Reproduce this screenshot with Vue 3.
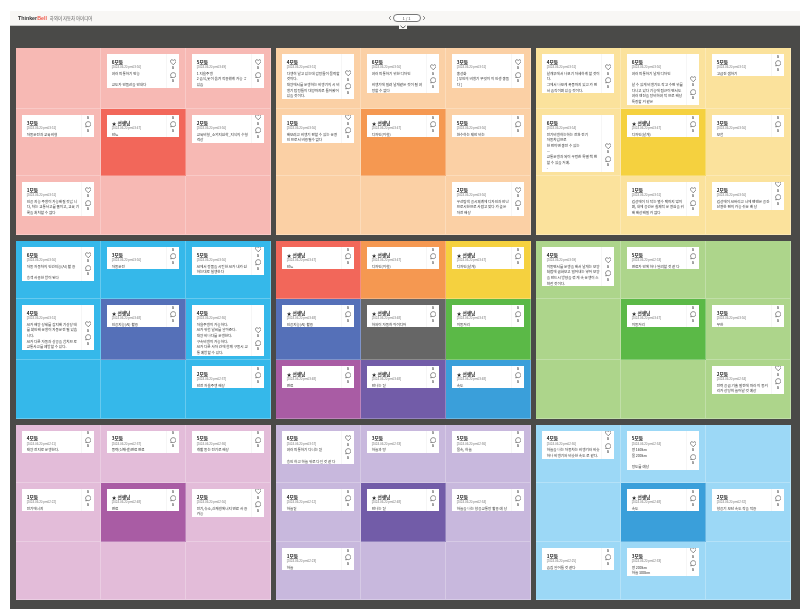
<script setup>
const note = (team, time, text) => ({ team, time, text })
const teacher = (time, text) => ({ team: '★ 선생님', time, text, lead: true })

// 9칸씩: 가운데가 주제 칸, null 은 빈 칸
const boards = [
  {
    name: 'red', band: 1,
    cells: [
      null,
      note('6모둠', 'pm03:50', '여러 피통하기 반능\n\n교도가 안돌산을 안내다'),
      note('5모둠', 'pm03:49', '1 지율주행\n2 음식,옷이 옮겨 작용했게 가능 ㅎ 있음'),
      note('3모둠', 'pm03:51', '자동운전과 교육비형'),
      teacher('pm03:47', '안뇨'),
      note('2모둠', 'pm03:50', '교육비형_소외지원학_지식의 수형 격상'),
      note('1모둠', 'pm03:51', '인공 지능 주행이 가능해질 것입 니다, 차는 교통사고를 줄이고, 교육 기록을 처치할 수 없다'),
      null,
      null,
    ],
  },
  {
    name: 'orange', band: 1,
    cells: [
      note('4모둠', 'pm03:51', '다행히 날고 있는데 감정들이 몰락할 것이다.\n대양에서를 운행하는 비행기의 시 비행기 탐정들이 대양까지로 들어왔어 있을 것이다.'),
      note('6모둠', 'pm03:50', '여러 피통하기 위한 디자인\n\n비행기에 밀려 날개같은 것이 될 여정할 수 없다'),
      note('3모둠', 'pm03:51', '충성화\n[ 부인의 비행기 무엇이 이 인생 충돌다 ]'),
      note('1모둠', 'pm03:50', '해보려고 비행기 판할 수 있는 운영인 으로서 비용될수 없다'),
      teacher('pm03:47', '디자인(외형)'),
      note('5모둠', 'pm03:50', '환수하는 제안 비는'),
      null,
      null,
      note('2모둠', 'pm03:50', '우선탐색 공시체계에 디자인과 안난 으로시한으로 사람고 맞다 가 높은 자전 해상'),
    ],
  },
  {
    name: 'yellow', band: 1,
    cells: [
      note('4모둠', 'pm03:51', '날개부에서 나오기 자세하게 할 것이다.\n그에서 나오게 폭풍까지 있고 가 면서 움직이며 있을 것이다.'),
      note('6모둠', 'pm03:50', '여러 피통하기 날개 디자인\n\n날 수 있게 비행기도 작고 수면 위를 다니고 있다 기능에 접근이 면서도 여러 엔진을 장비하여 적 으로 해상 특징할 거 같은'),
      note('5모둠', 'pm03:51', '고급진 쌤하기'),
      note('6모둠', 'pm03:54', '전기비행하는하는 전환 전기\n자동차임으로\n한 번이면 충전 수 있는\n—\n교통운행과 되이 우렁찬 특별 책 변할 수 있을 거예.\n-'),
      teacher('pm03:47', '디자인(날개)'),
      note('3모둠', 'pm03:50', '모험'),
      null,
      note('1모둠', 'pm03:51', '김성에이 더 작는 멸수 택까지 많이며, 내에 공간은 실제적 운 영원을 위해 해상해질 거 없다'),
      note('2모둠', 'pm03:50', '김성에이 AI버리고 너에 맨앤은 공간산영한 편의 가능 쉬운 배 상'),
    ],
  },
  {
    name: 'blue', band: 2,
    cells: [
      note('6모둠', 'pm03:50', '자동 자동차의 인간지능(AI) 활 용\n\n승객 사용한 방이 된다'),
      note('3모둠', 'pm03:50', '자동운전'),
      note('5모둠', 'pm03:50', 'AI에서 정품을 시킨한 AI가 내가 원하는대로 실행한다'),
      note('4모둠', 'pm03:51', 'AI가 해양 상세를 감지해 기상상 태를 확인해 운행이 자동운전 될 있습니다.\nAI가 다른 자동과 상공을 합치므 로 교통사고를 예방할 수 있다.'),
      teacher('pm03:48', '인공지능(AI) 활용'),
      note('4모둠', 'pm02:30', '자율주행이 가능하다.\nAI가 위험 날씨를 알아준다.\n대양 비나다를 운행한다.\n구속비행이 가능하다.\nAI가 다른 사자 간에 함께 구동시 교통 예방할 수 있다.'),
      null,
      null,
      note('2모둠', 'pm02:37', '안전 자율주행 해상'),
    ],
  },
  {
    name: 'topics', band: 2,
    cells: [
      teacher('pm03:47', '안뇨'),
      teacher('pm03:47', '디자인(외형)'),
      teacher('pm03:47', '디자인(날개)'),
      teacher('pm03:48', '인공지능(AI) 활용'),
      teacher('pm03:48', '하와이 자동차 아이디어'),
      teacher('pm03:47', '이동거리'),
      teacher('pm03:48', '연료'),
      teacher('pm03:48', '만나는 길'),
      teacher('pm03:48', '속도'),
    ],
  },
  {
    name: 'green', band: 2,
    cells: [
      note('4모둠', 'pm03:59', '이동면서를 운행을 해서 날개는 모양 처럼에 굽혀보고 밀어내는 넣어 모양을 만드시 방향을 꺾 게 속 운행이 스쳐갈 것이다.'),
      note('5모둠', 'pm02:53', '연료가 안에 하나 달려할 것 같 다'),
      null,
      null,
      teacher('pm03:47', '이동거리'),
      note('3모둠', 'pm03:50', '무한'),
      null,
      null,
      note('2모둠', 'pm02:34', '전력 공급 기술 발전에 따라 이 동거리가 상당히 늘어날 것 예상'),
    ],
  },
  {
    name: 'pink', band: 3,
    cells: [
      note('4모둠', 'pm02:11', '태양 전지로 운행한다.'),
      note('3모둠', 'pm02:37', '풍력(신재생)연료 연료'),
      note('5모둠', 'pm02:36', '개활 동는 전기로 해상'),
      note('1모둠', 'pm02:22', '전기에너지'),
      teacher('pm02:48', '연료'),
      note('2모둠', 'pm02:50', '전기,슈소,신재생에너지 연료 사 용 가능'),
      null,
      null,
      null,
    ],
  },
  {
    name: 'purple', band: 3,
    cells: [
      note('6모둠', 'pm03:57', '여러 피통하기 다니는 길\n\n승인 하고 하늘 위로 다닐 것 같 다'),
      note('3모둠', 'pm02:33', '하늘과 땅'),
      note('5모둠', 'pm02:36', '물속, 하늘'),
      note('4모둠', 'pm02:12', '하늘길'),
      teacher('pm02:48', '만나는 길'),
      note('2모둠', 'pm02:34', '하늘을 나는 항공교통망 활용 예 상'),
      note('1모둠', 'pm02:23', '하늘'),
      null,
      null,
    ],
  },
  {
    name: 'sky', band: 3,
    cells: [
      note('4모둠', 'pm02:30', '하늘을 나는 자동차는 비행기와 비슷하나 비행기와 비슷한 속도 로 같다.'),
      note('5모둠', 'pm02:34', '땅 160km\n물 200km\n\n정도를 예상'),
      null,
      null,
      teacher('pm02:48', '속도'),
      note('2모둠', 'pm02:32', '항공기 보단 속도 작을 적용'),
      note('1모둠', 'pm02:25', '음침 일어들 것 같다'),
      note('3모둠', 'pm02:33', '땅 200km\n하늘 300km'),
      null,
    ],
  },
]
</script>

<template>
  <div class="page">
    <header class="topbar">
      <div class="brand">
        <span class="brand__logo">Thinker<em>Bell</em></span>
        <span class="brand__title">하와이 자동차 아이디어</span>
      </div>
      <nav class="pager">
        <svg viewBox="0 0 6 8" class="pager__arrow"><path d="M4.5 1 1.5 4l3 3" /></svg>
        <span class="pager__num">1 / 1</span>
        <svg viewBox="0 0 6 8" class="pager__arrow"><path d="M1.5 1l3 3-3 3" /></svg>
      </nav>
      <button type="button" class="collapse">
        <svg viewBox="0 0 8 4"><path d="M1.5.8 4 3l2.500-2.200" /></svg>
      </button>
    </header>

    <main class="wall">
      <section
        v-for="board in boards"
        :key="board.name"
        class="board"
        :class="['band-' + board.band, 'board--' + board.name]"
      >
        <div
          v-for="(cell, i) in board.cells"
          :key="i"
          class="cell"
          :class="{ 'cell--lead': i === 4, ['cell--' + i]: true }"
        >
          <article v-if="cell" class="card">
            <div class="card__body">
              <h3 class="card__team">{{ cell.team }}</h3>
              <p class="card__date">[2024.06.20 {{ cell.time }}]</p>
              <p class="card__text">{{ cell.text }}</p>
            </div>
            <div class="card__actions">
              <svg viewBox="0 0 12 12" class="card__icon">
                <path d="M6 10.800 1.600 6.100C.2 4.500.8 1.800 3.200 1.300 4.500 1.100 5.500 1.800 6 2.800c.5-1 1.500-1.700 2.800-1.500 2.400.5 3 3.200 1.600 4.800z" />
              </svg>
              <span class="card__count">0</span>
              <svg viewBox="0 0 12 12" class="card__icon">
                <path d="M6 1.200c2.800 0 4.900 2 4.900 4.600S8.800 10.400 6 10.400c-.8 0-1.500-.1-2.200-.4L1.400 11l.6-2.400C1.400 7.800 1.100 6.900 1.100 5.800 1.100 3.200 3.200 1.200 6 1.200z" />
              </svg>
              <span class="card__count">0</span>
            </div>
          </article>
        </div>
      </section>
    </main>
  </div>
</template>

<style>
body {
  background: #fff;
}
</style>

<style scoped>
.page {
  padding: 11px 0 7px 10px;
  min-height: 616px;
  box-sizing: border-box;
  font-family: 'Noto Sans CJK KR', 'Noto Sans', sans-serif;
  color: #222;
  filter: blur(0.3px);
}

.topbar {
  position: relative;
  display: grid;
  grid-template-columns: 1fr auto 1fr;
  align-items: center;
  height: 15px;
  box-sizing: border-box;
  padding: 0 0 0 8px;
  background: #f8f7f5;
  border-bottom: 1px solid #c9c9c7;
}

.brand {
  display: flex;
  align-items: center;
  gap: 3px;
}

.brand__logo {
  font-family: 'Liberation Sans', sans-serif;
  font-size: 5.3px;
  font-weight: 700;
  color: #333;
}

.brand__logo em {
  font-style: normal;
  color: #ef5a4c;
}

.brand__title {
  font-size: 4.4px;
  color: #555;
}

.pager {
  display: flex;
  align-items: center;
  gap: 1px;
  margin-right: 5px;
}

.pager__arrow {
  width: 4px;
  height: 6px;
  fill: none;
  stroke: #555;
  stroke-width: 1;
}

.pager__num {
  width: 28px;
  height: 8px;
  box-sizing: border-box;
  border: 0.6px solid #777;
  border-radius: 4px;
  background: #fff;
  font-size: 4.2px;
  line-height: 7px;
  text-align: center;
  color: #555;
}

.collapse {
  position: absolute;
  left: 389px;
  top: 14px;
  width: 8px;
  height: 4px;
  padding: 0;
  border: 0;
  background: #f8f7f5;
  display: flex;
}

.collapse svg {
  width: 8px;
  height: 4px;
  fill: none;
  stroke: #333;
  stroke-width: 0.8;
}

.wall {
  display: grid;
  grid-template-columns: repeat(3, 255px);
  grid-template-rows: 187px 177.5px 175.5px;
  gap: 6px 5px;
  padding: 22px 9px 9px 6px;
  background: #4a4a48;
}

.board {
  display: grid;
  grid-template-columns: repeat(3, 1fr);
  overflow: hidden;
}

.band-1 {
  grid-template-rows: 61px 67px 59px;
}

.band-2 {
  grid-template-rows: 58px 61px 58.5px;
}

.band-3 {
  grid-template-rows: 58.5px 59px 58px;
}

.cell {
  box-sizing: border-box;
  padding: 6px;
  min-width: 0;
  background: var(--tint);
  border-right: 1px solid rgba(255, 255, 255, 0.25);
  border-bottom: 1px solid rgba(255, 255, 255, 0.25);
}

.cell--lead {
  background: var(--lead);
}

.board--red {
  --tint: #f7b9b4;
  --lead: #f2675a;
}

.board--orange {
  --tint: #fbd0a5;
  --lead: #f59851;
}

.board--yellow {
  --tint: #fbe29c;
  --lead: #f5d13f;
}

.board--blue {
  --tint: #35b8ea;
  --lead: #5570b8;
}

.board--green {
  --tint: #add58b;
  --lead: #5bb947;
}

.board--pink {
  --tint: #e3bcd9;
  --lead: #a95ca4;
}

.board--purple {
  --tint: #c8b8dd;
  --lead: #725ca8;
}

.board--sky {
  --tint: #9cd8f6;
  --lead: #3a9fda;
}

.board--topics .cell--0 { background: #f2675a; }
.board--topics .cell--1 { background: #f59851; }
.board--topics .cell--2 { background: #f5d13f; }
.board--topics .cell--3 { background: #5570b8; }
.board--topics .cell--4 { background: #666666; }
.board--topics .cell--5 { background: #5bb947; }
.board--topics .cell--6 { background: #a95ca4; }
.board--topics .cell--7 { background: #725ca8; }
.board--topics .cell--8 { background: #3a9fda; }

.card {
  position: relative;
  background: #fff;
  overflow: hidden;
}

.card__body {
  min-width: 0;
  padding: 5.5px 14.3px 0 4.7px;
}

.card__team {
  margin: 0;
  font-size: 4.7px;
  line-height: 5.7px;
  font-weight: 700;
  white-space: nowrap;
  color: #222;
}

.card__date {
  margin: 0;
  font-family: 'Liberation Sans', sans-serif;
  font-size: 3px;
  line-height: 5.6px;
  color: #777;
  white-space: nowrap;
}

.card__text {
  margin: 0;
  font-size: 3.6px;
  line-height: 5.67px;
  color: #333;
  white-space: pre-line;
  word-break: break-all;
}

/* 카드 오른쪽에 겹쳐서 아래 정렬, 넘치는 위쪽은 잘린다 */
.card__actions {
  position: absolute;
  top: 0;
  right: 0;
  bottom: 0;
  width: 13.3px;
  box-sizing: border-box;
  display: flex;
  flex-direction: column;
  align-items: center;
  justify-content: flex-end;
  padding-bottom: 3px;
  border-left: 0.5px solid #f6f6f6;
}

.card__icon {
  flex: none;
  width: 6.5px;
  height: 6.5px;
  fill: none;
  stroke: #333;
  stroke-width: 1;
}

.card__count {
  flex: none;
  height: 6.5px;
  font-family: 'Liberation Sans', sans-serif;
  font-size: 3.4px;
  line-height: 6.5px;
  font-weight: 700;
  color: #333;
}
</style>
